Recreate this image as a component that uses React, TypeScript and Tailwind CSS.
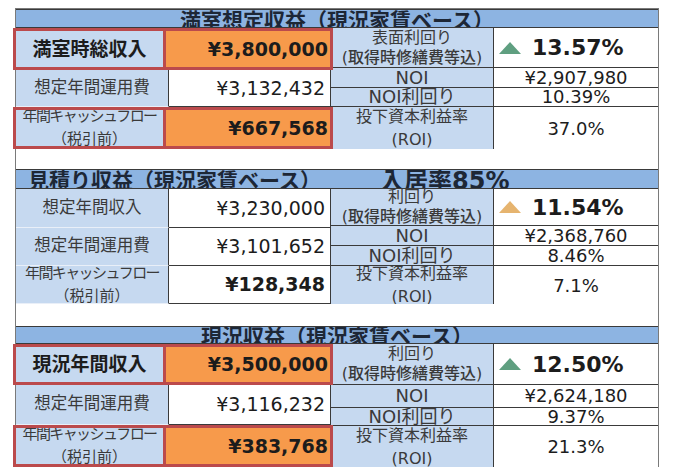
import React from "react";

type LeftRow = {
  h: string;
  label: React.ReactNode;
  value: string;
  hot?: boolean;
  strong?: boolean;
};

type RightBlock = {
  hs: [string, string, string, string];
  yieldLabel: string;
  yieldValue: string;
  tri: string;
  noi: string;
  noiYield: string;
  roi: string;
};

type Section = {
  header: React.ReactNode;
  headerH: string;
  left: LeftRow[];
  right: RightBlock;
};

function Triangle({ color }: { color: string }) {
  return (
    <svg width="24" height="14" viewBox="0 0 24 14" className="shrink-0">
      <polygon points="12,1 23,13 1,13" fill={color} />
    </svg>
  );
}

function CashFlowLabel() {
  return (
    <div className="flex flex-col items-center leading-[23px] text-[#3a3a3a]">
      <span className="text-[15px] tracking-[-1.6px]">年間キャッシュフロー</span>
      <span className="text-[15px]">（税引前）</span>
    </div>
  );
}

function Left({ rows }: { rows: LeftRow[] }) {
  return (
    <div className="flex w-[314px] flex-col">
      {rows.map((r, i) =>
        r.hot ? (
          <div key={i} className={`relative -mx-[3px] flex border-[3px] border-[#bb4a4c] ${r.h}`}>
            <div className="flex w-[150px] items-center justify-center overflow-hidden border-r-[3px] border-[#bb4a4c] bg-[#c6d9f0]">
              {r.label}
            </div>
            <div className="flex flex-1 items-center justify-end bg-[#f79a4b] pr-[2px] text-[19px] font-bold text-[#1c1c1c]">
              {r.value}
            </div>
          </div>
        ) : (
          <div key={i} className={`flex ${r.h}`}>
            <div className="flex w-[153px] items-center justify-center overflow-hidden border-r border-b border-r-[#3a3a3a] border-b-[#e9eff8] bg-[#c6d9f0]">
              {r.label}
            </div>
            <div
              className={`flex flex-1 items-center justify-end border-b border-[#3a3a3a] bg-white pr-[5px] text-[19px] text-[#1c1c1c] ${
                r.strong ? "font-bold" : ""
              }`}
            >
              {r.value}
            </div>
          </div>
        )
      )}
    </div>
  );
}

function Right({ b }: { b: RightBlock }) {
  const labelCell =
    "flex w-[163px] flex-col items-center justify-center overflow-hidden border-r border-[#3a3a3a] bg-[#c6d9f0] text-[#3a3a3a]";
  return (
    <div className="flex flex-1 flex-col border-l border-[#3a3a3a]">
      <div className={`flex border-b border-[#3a3a3a] ${b.hs[0]}`}>
        <div className={`${labelCell} leading-[20px]`}>
          <span className="text-[16px]">{b.yieldLabel}</span>
          <span className="text-[16px] font-medium">(取得時修繕費等込)</span>
        </div>
        <div className="flex flex-1 items-center gap-[10px] bg-white pl-[4px]">
          <Triangle color={b.tri} />
          <span className="text-[22px] font-bold text-[#1c1c1c]">{b.yieldValue}</span>
        </div>
      </div>
      <div className={`flex border-b border-[#3a3a3a] ${b.hs[1]}`}>
        <div className={`${labelCell} text-[18px] leading-none`}>NOI</div>
        <div className="flex flex-1 items-center justify-center overflow-hidden bg-white text-[18px] leading-none text-[#1c1c1c]">
          {b.noi}
        </div>
      </div>
      <div className={`flex border-b border-[#3a3a3a] ${b.hs[2]}`}>
        <div className={`${labelCell} text-[18px] leading-none`}>NOI利回り</div>
        <div className="flex flex-1 items-center justify-center overflow-hidden bg-white text-[18px] leading-none text-[#1c1c1c]">
          {b.noiYield}
        </div>
      </div>
      <div className={`flex ${b.hs[3]}`}>
        <div className={`${labelCell} leading-[23px]`}>
          <span className="text-[16px]">投下資本利益率</span>
          <span className="text-[16px]">(ROI)</span>
        </div>
        <div className="flex flex-1 items-center justify-center bg-white text-[18px] text-[#1c1c1c]">{b.roi}</div>
      </div>
    </div>
  );
}

const plain = (t: string) => <span className="text-[16.5px] text-[#3a3a3a]">{t}</span>;
const bold = (t: string) => <span className="text-[19px] font-bold text-[#1c1c1c]">{t}</span>;

const sections: Section[] = [
  {
    headerH: "h-[19px]",
    header: <div className="w-full pt-[2px] text-center">満室想定収益（現況家賃ベース）</div>,
    left: [
      { h: "h-[42px]", label: bold("満室時総収入"), value: "¥3,800,000", hot: true },
      { h: "h-[37px]", label: plain("想定年間運用費"), value: "¥3,132,432" },
      { h: "h-[42px]", label: <CashFlowLabel />, value: "¥667,568", hot: true },
    ],
    right: {
      hs: ["h-[40px]", "h-[20px]", "h-[19px]", "h-[42px]"],
      yieldLabel: "表面利回り",
      yieldValue: "13.57%",
      tri: "#5f9f80",
      noi: "¥2,907,980",
      noiYield: "10.39%",
      roi: "37.0%",
    },
  },
  {
    headerH: "h-[20px]",
    header: (
      <div className="flex w-full pt-[2px]">
        <div className="w-[330px] pl-[12px]">見積り収益（現況家賃ベース）</div>
        <div className="pl-[34px] text-[24px]">入居率85%</div>
      </div>
    ),
    left: [
      { h: "h-[39px]", label: plain("想定年間収入"), value: "¥3,230,000" },
      { h: "h-[38px]", label: plain("想定年間運用費"), value: "¥3,101,652" },
      { h: "h-[38px]", label: <CashFlowLabel />, value: "¥128,348", strong: true },
    ],
    right: {
      hs: ["h-[37px]", "h-[20px]", "h-[20px]", "h-[38px]"],
      yieldLabel: "利回り",
      yieldValue: "11.54%",
      tri: "#e6b46f",
      noi: "¥2,368,760",
      noiYield: "8.46%",
      roi: "7.1%",
    },
  },
  {
    headerH: "h-[18px]",
    header: <div className="w-full pt-[1px] text-center">現況収益（現況家賃ベース）</div>,
    left: [
      { h: "h-[41px]", label: bold("現況年間収入"), value: "¥3,500,000", hot: true },
      { h: "h-[40px]", label: plain("想定年間運用費"), value: "¥3,116,232" },
      { h: "h-[42px]", label: <CashFlowLabel />, value: "¥383,768", hot: true },
    ],
    right: {
      hs: ["h-[41px]", "h-[23px]", "h-[18px]", "h-[41px]"],
      yieldLabel: "利回り",
      yieldValue: "12.50%",
      tri: "#5f9f80",
      noi: "¥2,624,180",
      noiYield: "9.37%",
      roi: "21.3%",
    },
  },
];

export default function App() {
  return (
    <div className="h-[475px] w-[677px] bg-white pt-[8px] font-['DejaVu_Sans','Noto_Sans_CJK_JP',sans-serif]">
      <div className="ml-[15px] w-[644px] border-x border-t border-[#7a7a7a]">
        {sections.map((s, i) => (
          <div key={i}>
            {i > 0 && <div className={i === 1 ? "h-[20px]" : "h-[22px]"} />}
            <div
              className={`flex items-start overflow-hidden border-y border-[#3a3a3a] bg-[#8db4e2] text-[21px] font-bold leading-[19px] text-[#1d2736] ${s.headerH}`}
            >
              {s.header}
            </div>
            <div className="flex">
              <Left rows={s.left} />
              <Right b={s.right} />
            </div>
          </div>
        ))}
      </div>
    </div>
  );
}
